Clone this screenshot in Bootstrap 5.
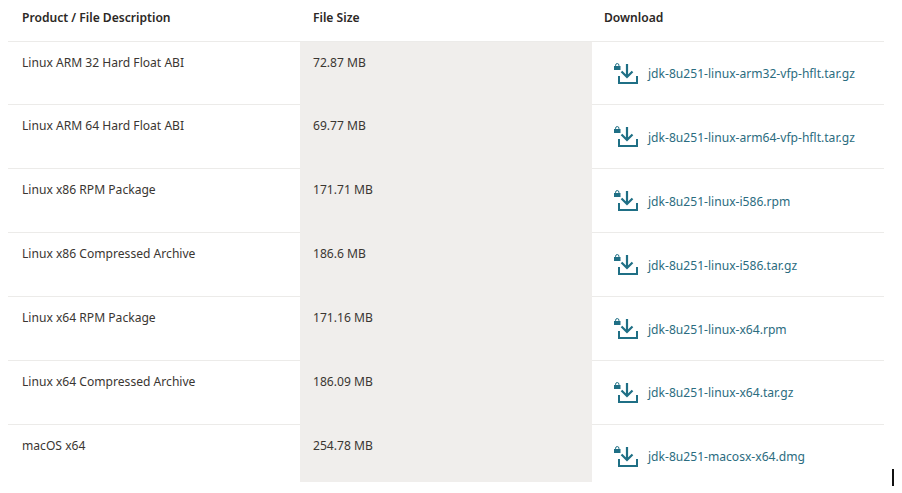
<!DOCTYPE html>
<html lang="en">
<head>
<meta charset="utf-8">
<title>Downloads</title>
<link href="https://cdn.jsdelivr.net/npm/bootstrap@5.3.0/dist/css/bootstrap.min.css" rel="stylesheet">
<style>
html, body { height: 493px; overflow: hidden; background: #fff; }
body { font-family: "Noto Sans", "Open Sans", sans-serif; color: #3a3632; }
.dl-wrap { padding: 0 18px 0 8px; }
.dl-table { table-layout: fixed; width: 876px; margin: 0; font-size: 12.1px; line-height: 17px; --bs-table-border-color: #ecebe9; color: #3a3632; }
.dl-table th { height: 41px; padding: 9px 12px 0 14px; vertical-align: top; font-weight: 600; font-size: 12.1px; color: #2c2825; border-bottom: 1px solid #ecebe9; }
.dl-table td { height: 63.9px; padding: 12px 12px 0 14px; vertical-align: top; border-bottom: 1px solid #ecebe9; }
.dl-table tr:last-child td { height: 58px; border-bottom: 0; }
.dl-table th:nth-child(2), .dl-table td:nth-child(2) { padding-left: 13px; }
.dl-table th:nth-child(3), .dl-table td:nth-child(3) { padding-left: 12px; }
.dl-table td.size-cell { background: #f0eeec; border-bottom-color: #f0eeec; }
.dl-link { color: #2b6c80; text-decoration: none; white-space: nowrap; gap: 9px; margin-left: 9px; margin-top: 8px; }
.dl-ico { width: 26px; height: 24px; flex: none; }
.caret-mark { position: absolute; left: 892px; top: 469px; width: 2px; height: 17px; background: #111; }
</style>
</head>
<body>
<div class="dl-wrap">
<table class="table dl-table">
<thead>
<tr><th>Product / File Description</th><th>File Size</th><th>Download</th></tr>
</thead>
<tbody>
<tr><td>Linux ARM 32 Hard Float ABI</td><td class="size-cell">72.87 MB</td><td><a class="dl-link d-flex align-items-center" href="#"><svg class="dl-ico" viewBox="0 0 26 24"><use href="#dlicon"/></svg>jdk-8u251-linux-arm32-vfp-hflt.tar.gz</a></td></tr>
<tr><td>Linux ARM 64 Hard Float ABI</td><td class="size-cell">69.77 MB</td><td><a class="dl-link d-flex align-items-center" href="#"><svg class="dl-ico" viewBox="0 0 26 24"><use href="#dlicon"/></svg>jdk-8u251-linux-arm64-vfp-hflt.tar.gz</a></td></tr>
<tr><td>Linux x86 RPM Package</td><td class="size-cell">171.71 MB</td><td><a class="dl-link d-flex align-items-center" href="#"><svg class="dl-ico" viewBox="0 0 26 24"><use href="#dlicon"/></svg>jdk-8u251-linux-i586.rpm</a></td></tr>
<tr><td>Linux x86 Compressed Archive</td><td class="size-cell">186.6 MB</td><td><a class="dl-link d-flex align-items-center" href="#"><svg class="dl-ico" viewBox="0 0 26 24"><use href="#dlicon"/></svg>jdk-8u251-linux-i586.tar.gz</a></td></tr>
<tr><td>Linux x64 RPM Package</td><td class="size-cell">171.16 MB</td><td><a class="dl-link d-flex align-items-center" href="#"><svg class="dl-ico" viewBox="0 0 26 24"><use href="#dlicon"/></svg>jdk-8u251-linux-x64.rpm</a></td></tr>
<tr><td>Linux x64 Compressed Archive</td><td class="size-cell">186.09 MB</td><td><a class="dl-link d-flex align-items-center" href="#"><svg class="dl-ico" viewBox="0 0 26 24"><use href="#dlicon"/></svg>jdk-8u251-linux-x64.tar.gz</a></td></tr>
<tr><td>macOS x64</td><td class="size-cell">254.78 MB</td><td><a class="dl-link d-flex align-items-center" href="#"><svg class="dl-ico" viewBox="0 0 26 24"><use href="#dlicon"/></svg>jdk-8u251-macosx-x64.dmg</a></td></tr>
</tbody>
</table>
</div>
<div class="caret-mark"></div>
<svg width="0" height="0" class="d-block">
<defs>
<g id="dlicon">
<path d="M6 14V21H24V14" fill="none" stroke="#1f6f85" stroke-width="2"/>
<path d="M14 2V15M8.500 9.500L14 15L19.500 9.500" fill="none" stroke="#1f6f85" stroke-width="2.200"/>
<rect x="1" y="4" width="6.500" height="4" fill="#1f6f85"/>
<path d="M2.600 4.500V3.200A1.650 1.650 0 0 1 5.900 3.200V4.500" fill="none" stroke="#1f6f85" stroke-width="1"/>
</g>
</defs>
</svg>
<script src="https://cdn.jsdelivr.net/npm/bootstrap@5.3.0/dist/js/bootstrap.bundle.min.js"></script>
</body>
</html>
